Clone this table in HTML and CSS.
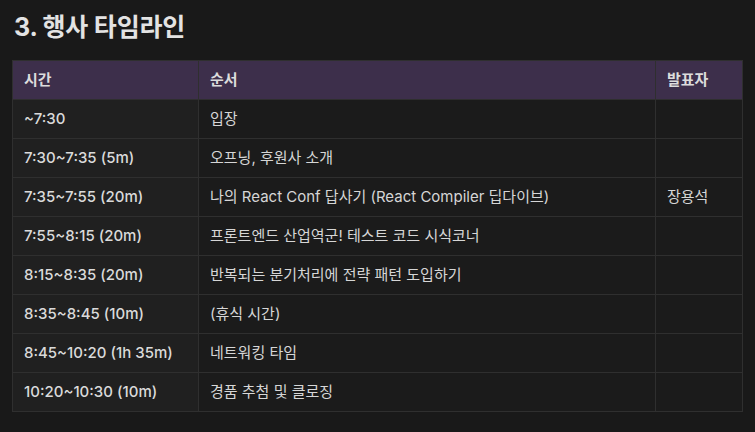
FILE: index.html
```html
<!DOCTYPE html>
<html lang="ko">
<head>
<meta charset="utf-8">
<link rel="stylesheet" href="styles.css">
</head>
<body>
<h2 class="title">3. 행사 타임라인</h2>
<table class="timeline">
  <colgroup>
    <col class="c-time">
    <col class="c-order">
    <col class="c-speaker">
  </colgroup>
  <thead>
    <tr><th>시간</th><th>순서</th><th>발표자</th></tr>
  </thead>
  <tbody>
    <tr><td class="time">~7:30</td><td>입장</td><td></td></tr>
    <tr><td class="time">7:30~7:35 (5m)</td><td>오프닝, 후원사 소개</td><td></td></tr>
    <tr><td class="time">7:35~7:55 (20m)</td><td>나의 React Conf 답사기 (React Compiler 딥다이브)</td><td>장용석</td></tr>
    <tr><td class="time">7:55~8:15 (20m)</td><td>프론트엔드 산업역군! 테스트 코드 시식코너</td><td></td></tr>
    <tr><td class="time">8:15~8:35 (20m)</td><td>반복되는 분기처리에 전략 패턴 도입하기</td><td></td></tr>
    <tr><td class="time">8:35~8:45 (10m)</td><td>(휴식 시간)</td><td></td></tr>
    <tr><td class="time">8:45~10:20 (1h 35m)</td><td>네트워킹 타임</td><td></td></tr>
    <tr><td class="time">10:20~10:30 (10m)</td><td>경품 추첨 및 클로징</td><td></td></tr>
  </tbody>
</table>
</body>
</html>
```
FILE: styles.css
```css
html, body {
  margin: 0;
  padding: 0;
  background: #191919;
}
body {
  padding: 0 12px;
  font-family: Inter, "Noto Sans CJK KR", sans-serif;
  color: #d4d4d4;
}
.title {
  margin: 0;
  padding: 11px 0 0 2px;
  height: 50px;
  box-sizing: border-box;
  font-size: 25px;
  font-weight: 700;
  line-height: 32px;
  color: #e3e3e3;
  letter-spacing: -0.2px;
}
.timeline {
  border-collapse: collapse;
  width: 730px;
  margin-top: 10px;
  table-layout: fixed;
  font-size: 15px;
}
.c-time { width: 186px; }
.c-order { width: 457px; }
.c-speaker { width: 87px; }
.timeline th,
.timeline td {
  border: 1.5px solid #2f2f2f;
  height: 39px;
  box-sizing: border-box;
  padding: 0 10px 0 11px;
  text-align: left;
  vertical-align: middle;
  line-height: 20px;
}
.timeline td {
  background: #1b1b1b;
  font-weight: 400;
  color: #d6d6d6;
}
.timeline td.time {
  background: #202020;
  font-weight: 500;
  color: #dadada;
}
.timeline th {
  background: #3d2f4b;
  font-weight: 600;
  color: #dcdcdc;
}
```
